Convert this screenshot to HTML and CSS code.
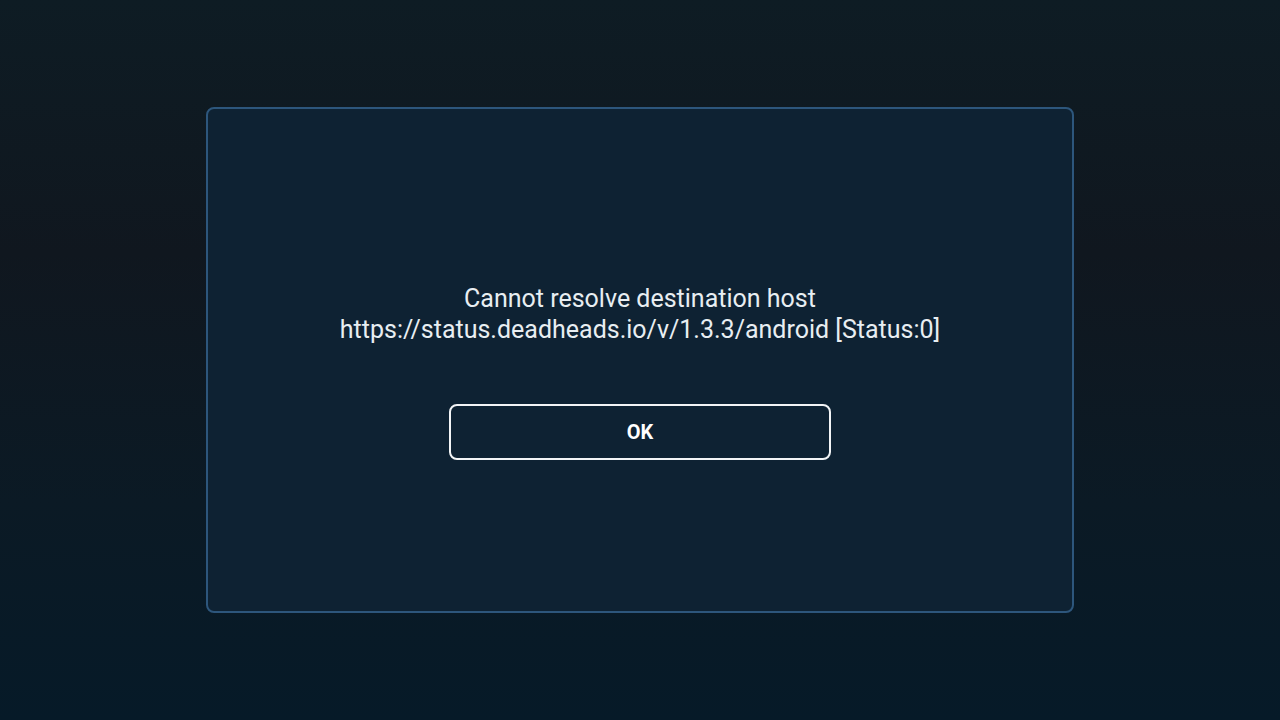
FILE: index.html
```html
<!DOCTYPE html>
<html lang="en">
<head>
  <meta charset="UTF-8">
  <meta name="viewport" content="width=device-width, initial-scale=1.0">
  <title>Connection Error</title>
  <link rel="stylesheet" href="styles.css">
</head>
<body>
  <!-- Error Dialog -->
  <div class="screen">
    <div class="dialog">
      <p class="message">
        Cannot resolve destination host<br>
        https://status.deadheads.io/v/1.3.3/android [Status:0]
      </p>
      <button class="ok-btn">OK</button>
    </div>
  </div>
</body>
</html>
```

FILE: styles.css
```css
/* Global Styles */
body {
  font-family: 'Roboto', 'Liberation Sans', sans-serif;
  margin: 0;
  padding: 0;
  color: #e8eef2;
}

/* Screen background */
.screen {
  height: 720px;
  display: flex;
  align-items: center;
  justify-content: center;
  background: linear-gradient(180deg, #0e1c24 0%, #10171f 35%, #0b1a25 70%, #061a28 100%);
}

/* Dialog */
.dialog {
  box-sizing: border-box;
  width: 868px;
  height: 506px;
  padding-top: 23px;
  background-color: #0e2233;
  border: 2px solid #2d567c;
  border-radius: 8px;
  display: flex;
  flex-direction: column;
  align-items: center;
  justify-content: center;
}

.message {
  margin: 0 0 59px;
  text-align: center;
  font-size: 25px;
  line-height: 31px;
  color: #e8eef2;
}

/* Buttons */
.ok-btn {
  box-sizing: border-box;
  width: 382px;
  height: 56px;
  background: transparent;
  color: #fff;
  border: 2px solid #f2f4f6;
  border-radius: 8px;
  font-family: 'Roboto', 'Liberation Sans', sans-serif;
  font-size: 20px;
  font-weight: bold;
  cursor: pointer;
}
```
